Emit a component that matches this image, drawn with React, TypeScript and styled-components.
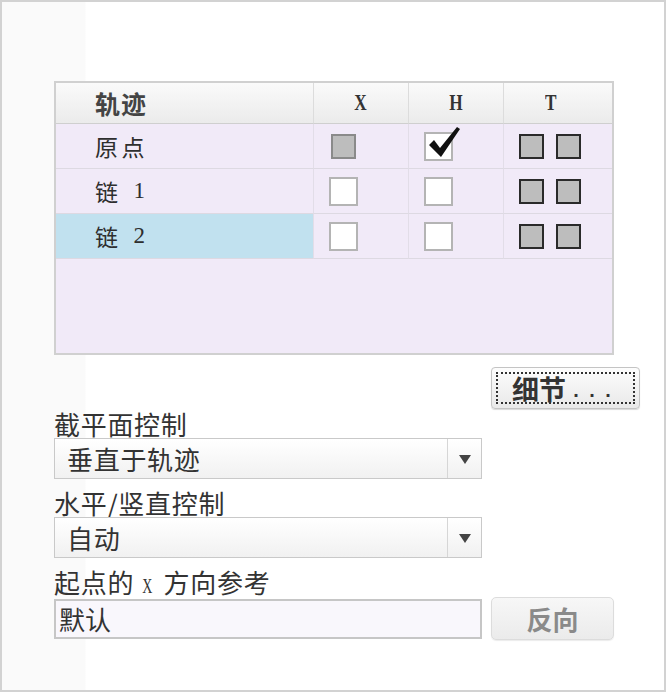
import React from "react";
import styled, { createGlobalStyle } from "styled-components";

const Global = createGlobalStyle`
  html, body { margin: 0; padding: 0; background: #fff; }
  body { font-family: "Noto Sans CJK SC", "Noto Sans", sans-serif; color: #333; }
`;

const Frame = styled.div`
  box-sizing: border-box;
  width: 666px;
  height: 692px;
  border: 2px solid #d2d2d2;
  background: linear-gradient(to right, #fafafa 0, #fafafa 83px, #ffffff 84px);
  padding: 79px 0 0 52px;
  display: flex;
  flex-direction: column;
`;

const Table = styled.div`
  box-sizing: border-box;
  width: 560px;
  height: 274px;
  border: 2px solid #d0d0d0;
  background: #f1eaf8;
  display: grid;
  grid-template-columns: 257px 95px 95px 1fr;
  grid-template-rows: 41px 45px 45px 45px;
  align-content: start;
`;

const HeadCell = styled.div<{ $first?: boolean; $shift?: number }>`
  box-sizing: border-box;
  background: linear-gradient(to bottom, #fafafa, #ebebeb);
  border-bottom: 1px solid #cfcfcf;
  border-left: ${(p) => (p.$first ? "none" : "1px solid #dcdcdc")};
  display: flex;
  align-items: center;
  justify-content: ${(p) => (p.$first ? "flex-start" : "center")};
  padding-left: ${(p) => (p.$first ? "39px" : "0")};
  padding-right: ${(p) => (p.$shift ? `${p.$shift}px` : "0")};
  font-weight: 700;
  font-size: 25px;
  letter-spacing: 1px;
  color: #444;
`;

const AxisHead = styled.span`
  font-family: "Liberation Serif", serif;
  font-weight: 700;
  font-size: 23px;
  color: #333;
  display: inline-block;
  transform: scaleX(0.75);
`;

const Cell = styled.div<{ $first?: boolean; $selected?: boolean }>`
  box-sizing: border-box;
  border-bottom: 1px solid #ddd9e2;
  border-left: ${(p) => (p.$first ? "none" : "1px solid #e2dde8")};
  display: flex;
  align-items: center;
  gap: 12px;
  padding-left: ${(p) => (p.$first ? "39px" : "15px")};
  background: ${(p) => (p.$selected ? "#c1e1ef" : "transparent")};
  font-size: 23px;
  letter-spacing: 3.5px;
  color: #2e2e2e;
`;

const Num = styled.span`
  font-family: "Liberation Serif", serif;
  font-size: 23px;
`;

const Slot = styled.span`
  width: 29px;
  height: 29px;
  display: flex;
  align-items: center;
  justify-content: center;
`;

const Check = styled.span<{ $variant: "gray" | "empty" | "dark" }>`
  box-sizing: border-box;
  position: relative;
  display: inline-block;
  width: ${(p) => (p.$variant === "empty" ? "29px" : "25px")};
  height: ${(p) => (p.$variant === "empty" ? "29px" : "25px")};
  border: 2px solid
    ${(p) => (p.$variant === "dark" ? "#2a2a2a" : p.$variant === "gray" ? "#8a8a8a" : "#b4b4b4")};
  background: ${(p) => (p.$variant === "empty" ? "#fff" : "#bdbdbd")};
`;

const CheckMark = styled.svg`
  position: absolute;
  left: 2px;
  top: -7px;
  width: 34px;
  height: 33px;
  overflow: visible;
`;

const ButtonRow = styled.div`
  display: flex;
  padding-left: 437px;
  margin-top: 12px;
`;

const DetailButton = styled.button`
  box-sizing: border-box;
  width: 149px;
  height: 42px;
  border: 1px solid #c4c4c4;
  border-radius: 4px;
  background: linear-gradient(to bottom, #fdfdfd, #e9e9e9);
  box-shadow: 0 1px 1px rgba(0, 0, 0, 0.15);
  padding: 4px;
  display: flex;
  font-family: inherit;
`;

const FocusRing = styled.span`
  box-sizing: border-box;
  flex: 1;
  border: 2px dotted #333;
  display: flex;
  align-items: center;
  padding-left: 14px;
  font-size: 27px;
  font-weight: 700;
  color: #333;
  letter-spacing: 0;
`;

const Dots = styled.span`
  font-family: "Liberation Mono", monospace;
  font-size: 20px;
  letter-spacing: 4px;
  margin-left: 4px;
  margin-top: 6px;
`;

const Label = styled.div<{ $gap: number; $h: number }>`
  height: ${(p) => p.$h}px;
  line-height: ${(p) => p.$h}px;
  margin-top: ${(p) => p.$gap}px;
  font-size: 26px;
  letter-spacing: 0.7px;
  color: #333;
  white-space: nowrap;
`;

const SmallX = styled.span`
  font-family: "Liberation Serif", serif;
  font-size: 20px;
  letter-spacing: 0;
  display: inline-block;
  transform: scaleX(0.7);
  margin: 0 9px 0 6px;
`;

const Combo = styled.div`
  box-sizing: border-box;
  width: 428px;
  height: 41px;
  border: 1px solid #c9c9c9;
  background: linear-gradient(to bottom, #ffffff, #f1f1f1);
  display: flex;
`;

const ComboText = styled.div`
  flex: 1;
  display: flex;
  align-items: center;
  padding-left: 12px;
  font-size: 26px;
  letter-spacing: 0.7px;
  color: #333;
`;

const ComboArrow = styled.div`
  width: 33px;
  border-left: 1px solid #d6d6d6;
  display: flex;
  align-items: center;
  justify-content: center;
`;

const Triangle = styled.span`
  width: 0;
  height: 0;
  border-left: 6px solid transparent;
  border-right: 6px solid transparent;
  border-top: 9px solid #444;
  margin-top: 2px;
`;

const InputRow = styled.div`
  display: flex;
  align-items: center;
  gap: 9px;
  margin-top: 1px;
`;

const TextBox = styled.div`
  box-sizing: border-box;
  width: 428px;
  height: 40px;
  border: 2px solid #c6c6c6;
  background: #f9f7fc;
  display: flex;
  align-items: center;
  padding-left: 3px;
  font-size: 26px;
  letter-spacing: 0;
  color: #333;
`;

const ReverseButton = styled.button`
  box-sizing: border-box;
  width: 123px;
  height: 43px;
  border: 1px solid #dcdcdc;
  border-radius: 5px;
  background: linear-gradient(to bottom, #f7f7f7, #ebebeb);
  box-shadow: 0 1px 1px rgba(0, 0, 0, 0.08);
  font-family: inherit;
  font-size: 26px;
  font-weight: 700;
  color: #8a8a8a;
  letter-spacing: 0;
`;

const rows = [
  { name: "原点", num: "", x: "gray" as const, h: "checked" as const },
  { name: "链", num: "1", x: "empty" as const, h: "empty" as const },
  { name: "链", num: "2", x: "empty" as const, h: "empty" as const, selected: true },
];

export default function App() {
  return (
    <>
      <Global />
      <Frame>
        <Table>
          <HeadCell $first>轨迹</HeadCell>
          <HeadCell><AxisHead>X</AxisHead></HeadCell>
          <HeadCell><AxisHead>H</AxisHead></HeadCell>
          <HeadCell $shift={14}><AxisHead>T</AxisHead></HeadCell>
          {rows.map((r, i) => (
            <React.Fragment key={i}>
              <Cell $first $selected={r.selected}>
                {r.name}
                {r.num && <Num>{r.num}</Num>}
              </Cell>
              <Cell>
                <Slot><Check $variant={r.x} /></Slot>
              </Cell>
              <Cell>
                <Slot>
                  {r.h === "checked" ? (
                    <Check $variant="empty">
                      <CheckMark viewBox="0 0 34 33">
                        <path d="M1 18 L6 13 L12 21 L29 0 L32 2 L13 30 Z" fill="#111" />
                      </CheckMark>
                    </Check>
                  ) : (
                    <Check $variant="empty" />
                  )}
                </Slot>
              </Cell>
              <Cell>
                <Check $variant="dark" />
                <Check $variant="dark" />
              </Cell>
            </React.Fragment>
          ))}
        </Table>
        <ButtonRow>
          <DetailButton>
            <FocusRing>
              细节<Dots>...</Dots>
            </FocusRing>
          </DetailButton>
        </ButtonRow>
        <Label $gap={0} $h={29}>截平面控制</Label>
        <Combo>
          <ComboText>垂直于轨迹</ComboText>
          <ComboArrow><Triangle /></ComboArrow>
        </Combo>
        <Label $gap={10} $h={28}>水平/竖直控制</Label>
        <Combo>
          <ComboText>自动</ComboText>
          <ComboArrow><Triangle /></ComboArrow>
        </Combo>
        <Label $gap={10} $h={28}>
          起点的<SmallX>X</SmallX>方向参考
        </Label>
        <InputRow>
          <TextBox>默认</TextBox>
          <ReverseButton>反向</ReverseButton>
        </InputRow>
      </Frame>
    </>
  );
}
